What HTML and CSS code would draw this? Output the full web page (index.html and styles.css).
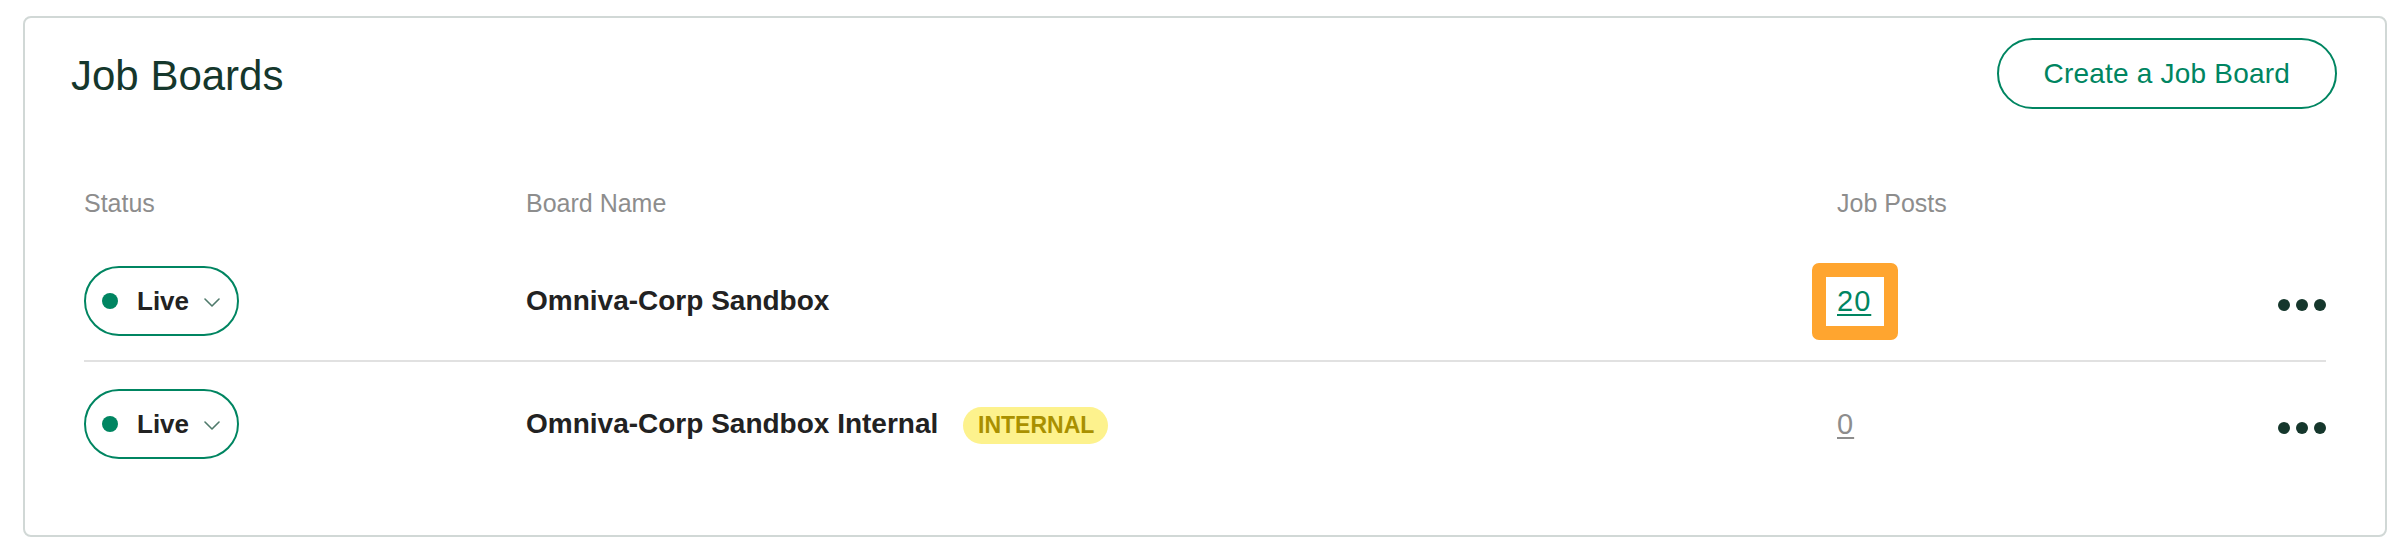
FILE: index.html
```html
<!DOCTYPE html>
<html lang="en">
<head>
<meta charset="utf-8">
<title>Job Boards</title>
<link rel="stylesheet" href="styles.css">
</head>
<body>
<section class="card">
  <header class="card-header">
    <h1 class="title">Job Boards</h1>
    <button class="btn-outline" type="button">Create a Job Board</button>
  </header>
  <div class="table">
    <div class="row head">
      <div class="th">Status</div>
      <div class="th">Board Name</div>
      <div class="th">Job Posts</div>
      <div class="th"></div>
    </div>
    <div class="row item divided">
      <div class="cell">
        <button class="status-pill" type="button">
          <span class="dot"></span>
          <span class="status-label">Live</span>
          <svg class="chev" width="16" height="9" viewBox="0 0 16 9"><path d="M1 1 L8 8 L15 1" fill="none" stroke="#4f7a6b" stroke-width="1.6" stroke-linecap="round" stroke-linejoin="round"/></svg>
        </button>
      </div>
      <div class="cell name">Omniva-Corp Sandbox</div>
      <div class="cell"><span class="highlight"><a class="posts active" href="#">20</a></span></div>
      <div class="cell actions">
        <svg class="more" width="48" height="12" viewBox="0 0 48 12"><circle cx="6" cy="6" r="6"/><circle cx="24" cy="6" r="6"/><circle cx="42" cy="6" r="6"/></svg>
      </div>
    </div>
    <div class="row item">
      <div class="cell">
        <button class="status-pill" type="button">
          <span class="dot"></span>
          <span class="status-label">Live</span>
          <svg class="chev" width="16" height="9" viewBox="0 0 16 9"><path d="M1 1 L8 8 L15 1" fill="none" stroke="#4f7a6b" stroke-width="1.6" stroke-linecap="round" stroke-linejoin="round"/></svg>
        </button>
      </div>
      <div class="cell name">Omniva-Corp Sandbox Internal <span class="badge">INTERNAL</span></div>
      <div class="cell"><a class="posts empty" href="#">0</a></div>
      <div class="cell actions">
        <svg class="more" width="48" height="12" viewBox="0 0 48 12"><circle cx="6" cy="6" r="6"/><circle cx="24" cy="6" r="6"/><circle cx="42" cy="6" r="6"/></svg>
      </div>
    </div>
  </div>
</section>
</body>
</html>
```

FILE: styles.css
```css
*, *::before, *::after { box-sizing: border-box; }

html, body { background: #ffffff; }

body {
  margin: 16px 21px 23px 23px;
  font-family: "Liberation Sans", Arial, sans-serif;
  color: #222222;
}

.card {
  border: 2px solid #d1d8d6;
  border-radius: 8px;
  padding: 20px 48px 51px 46px;
  background: #ffffff;
}

.card-header {
  display: flex;
  align-items: center;
  justify-content: space-between;
  height: 71px;
}

.title {
  margin: 0;
  padding-top: 4px;
  font-size: 42px;
  line-height: 50px;
  font-weight: 400;
  color: #15372c;
}

.btn-outline {
  height: 71px;
  padding: 0 45px;
  border: 2px solid #008561;
  border-radius: 36px;
  background: #ffffff;
  color: #008561;
  font-family: "Liberation Sans", Arial, sans-serif;
  font-size: 28px;
  line-height: 32px;
  letter-spacing: 0.2px;
  cursor: pointer;
}

.table {
  margin: 79px 11px 0 13px;
}

.row {
  display: grid;
  grid-template-columns: 442px 1311px 1fr auto;
  align-items: center;
}

.row.head {
  height: 52px;
  align-items: start;
}

.th {
  font-size: 25px;
  line-height: 30px;
  color: #8d8d8d;
}

.row.item {
  height: 122px;
  padding-top: 2px;
}

.row.divided {
  border-bottom: 2px solid #e1e1e1;
}

.cell {
  display: flex;
  align-items: center;
}

.status-pill {
  display: inline-flex;
  align-items: center;
  height: 70px;
  width: 155px;
  padding: 0 17px 0 16px;
  border: 2px solid #008561;
  border-radius: 35px;
  background: #ffffff;
  font-family: "Liberation Sans", Arial, sans-serif;
  cursor: pointer;
}

.dot {
  width: 16px;
  height: 16px;
  border-radius: 50%;
  background: #008561;
  flex: none;
}

.status-label {
  margin-left: 19px;
  font-size: 26px;
  font-weight: 700;
  line-height: 30px;
  color: #222222;
}

.chev {
  margin-left: 15px;
  margin-top: 3px;
  flex: none;
}

.name {
  font-size: 28px;
  font-weight: 700;
  line-height: 34px;
  color: #222222;
  white-space: pre;
}

.badge {
  display: inline-flex;
  align-items: center;
  height: 37px;
  margin-left: 17px;
  margin-top: 3px;
  padding: 0 14px 0 15px;
  border-radius: 19px;
  background: #fdf28d;
  color: #a99000;
  font-size: 23px;
  font-weight: 700;
  line-height: 37px;
}

.highlight {
  position: relative;
  display: inline-block;
}

.highlight::after {
  content: "";
  position: absolute;
  left: -25px;
  right: -27px;
  top: calc(50% - 38px);
  height: 77px;
  border: 14px solid #ffa52f;
  border-radius: 7px;
  pointer-events: none;
}

.posts {
  display: inline-block;
  font-size: 29px;
  line-height: 34px;
  letter-spacing: 1px;
  text-decoration: underline;
  text-decoration-thickness: 2px;
  text-underline-offset: 3px;
}

.posts.active { color: #008561; }
.posts.empty { color: #8d8d8d; }

.actions {
  justify-content: flex-end;
}

.more {
  fill: #15372c;
  margin-top: 8px;
}
```
